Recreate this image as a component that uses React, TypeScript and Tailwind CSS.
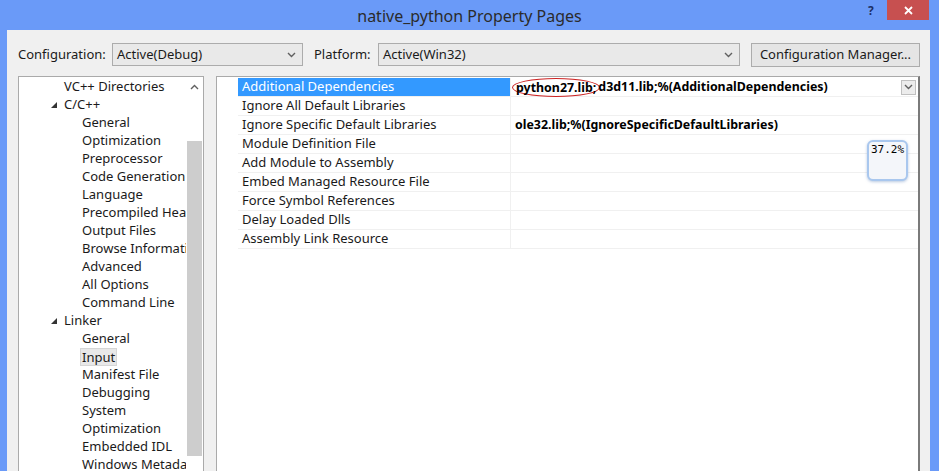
const font = { fontFamily: '"Noto Sans", "Open Sans", sans-serif' };

const tree: { label: string; level: number; arrow?: boolean; selected?: boolean }[] = [
  { label: "VC++ Directories", level: 1 },
  { label: "C/C++", level: 1, arrow: true },
  { label: "General", level: 2 },
  { label: "Optimization", level: 2 },
  { label: "Preprocessor", level: 2 },
  { label: "Code Generation", level: 2 },
  { label: "Language", level: 2 },
  { label: "Precompiled Headers", level: 2 },
  { label: "Output Files", level: 2 },
  { label: "Browse Information", level: 2 },
  { label: "Advanced", level: 2 },
  { label: "All Options", level: 2 },
  { label: "Command Line", level: 2 },
  { label: "Linker", level: 1, arrow: true },
  { label: "General", level: 2 },
  { label: "Input", level: 2, selected: true },
  { label: "Manifest File", level: 2 },
  { label: "Debugging", level: 2 },
  { label: "System", level: 2 },
  { label: "Optimization", level: 2 },
  { label: "Embedded IDL", level: 2 },
  { label: "Windows Metadata", level: 2 },
];

const props: { name: string; value?: string }[] = [
  { name: "Additional Dependencies", value: "d3d11.lib;%(AdditionalDependencies)" },
  { name: "Ignore All Default Libraries" },
  { name: "Ignore Specific Default Libraries", value: "ole32.lib;%(IgnoreSpecificDefaultLibraries)" },
  { name: "Module Definition File" },
  { name: "Add Module to Assembly" },
  { name: "Embed Managed Resource File" },
  { name: "Force Symbol References" },
  { name: "Delay Loaded Dlls" },
  { name: "Assembly Link Resource" },
];

function Chevron() {
  return (
    <svg width="9" height="6" viewBox="0 0 9 6" className="text-[#606060]">
      <path d="M1 1l3.5 3.5L8 1" fill="none" stroke="currentColor" strokeWidth="1.4" />
    </svg>
  );
}

function Combo({ width, text }: { width: string; text: string }) {
  return (
    <div className={`${width} h-[23px] flex items-center justify-between border border-[#acacac] bg-[#e9e9e9] pl-[4px] pr-[6px] text-[13px] text-[#1a1a1a]`}>
      <span>{text}</span>
      <Chevron />
    </div>
  );
}

export default function App() {
  return (
    <div style={font} className="w-[939px] h-[471px] overflow-hidden bg-[#6a9af8] flex flex-col">
      <div className="h-[30px] relative flex items-center justify-center shrink-0">
        <span className="text-[16px] text-[#2b2b2b] mt-[1px]">native_python Property Pages</span>
        <span className="absolute left-[868px] top-[2px] text-[12px] font-bold text-[#1c2f66]">?</span>
        <div className="absolute left-[887px] top-0 w-[42px] h-[20px] bg-[#c75050] flex items-center justify-center">
          <svg width="9" height="9" viewBox="0 0 9 9">
            <path d="M1 1l7 7M8 1l-7 7" stroke="white" strokeWidth="1.8" />
          </svg>
        </div>
      </div>
      <div className="ml-[7px] w-[923px] flex-1 bg-[#f0f0f0] flex flex-col">
        <div className="flex items-center h-[23px] mt-[13px] pl-[11px] text-[13px] text-[#1a1a1a]">
          <span className="w-[94px]">Configuration:</span>
          <Combo width="w-[191px]" text="Active(Debug)" />
          <span className="ml-[11px] w-[64px]">Platform:</span>
          <Combo width="w-[362px]" text="Active(Win32)" />
          <div className="ml-[11px] w-[169px] h-[24px] border border-[#acacac] bg-[#e5e5e5] flex items-center justify-center">
            Configuration Manager...
          </div>
        </div>
        <div className="flex mt-[10px] flex-1 min-h-0">
          <div className="ml-[11px] w-[186px] border border-[#aaaaaa] border-b-0 bg-white flex">
            <div className="flex-1 min-w-0 overflow-hidden pt-[1px] text-[13px] text-[#1a1a1a]">
              {tree.map((t, i) => (
                <div key={i} className="h-[18px] flex items-center whitespace-nowrap">
                  <span className={t.level === 1 ? "w-[45px] shrink-0 flex justify-end pr-[7px]" : "w-[63px] shrink-0"}>
                    {t.arrow && (
                      <svg width="6" height="6" viewBox="0 0 6 6">
                        <path d="M6 0V6H0Z" fill="#333" />
                      </svg>
                    )}
                  </span>
                  <span className={t.selected ? "bg-[#e8e8e8] border border-[#d6d6d6] px-[1px] -ml-[2px] leading-[16px]" : ""}>{t.label}</span>
                </div>
              ))}
            </div>
            <div className="w-[17px] shrink-0 flex flex-col items-center bg-white">
              <svg width="9" height="6" viewBox="0 0 9 6" className="mt-[7px]">
                <path d="M1 5l3.5-3.5L8 5" fill="none" stroke="#606060" strokeWidth="1.4" />
              </svg>
              <div className="mt-[51px] w-[15px] h-[315px] bg-[#cdcdcd]" />
            </div>
          </div>
          <div className="ml-[12px] w-[704px] border-l border-t border-[#aaaaaa] border-r-2 border-r-[#7a7a7a] bg-white">
            <div className="pl-[21px] pt-[1px]">
              {props.map((p, i) => (
                <div key={i} className="flex h-[19px] border-b border-[#f0f0f0] text-[13px]">
                  <div className={`w-[273px] shrink-0 pl-[4px] flex items-center border-r border-[#f0f0f0] ${i === 0 ? "bg-[#3399ff] text-white" : "text-[#1a1a1a]"}`}>
                    {p.name}
                  </div>
                  <div className="flex-1 flex items-center pl-[4px] pr-[2px] font-bold text-[12.4px] text-black relative">
                    {i === 0 && (
                      <>
                        <span className="rounded-[50%] border border-[#c22] px-[3px] -ml-[3px] leading-[17px]">python27.lib;</span>
                        <span className="-ml-[2px]">{p.value}</span>
                        <div className="ml-auto w-[15px] h-[15px] border border-[#c0c0c0] bg-[#ececec] flex items-center justify-center">
                          <Chevron />
                        </div>
                      </>
                    )}
                    {i !== 0 && p.value && <span>{p.value}</span>}
                    {i === 3 && (
                      <div className="absolute left-[356px] top-[5px] w-[41px] h-[41px] rounded-[6px] border-2 border-[#a9c7ee] bg-[#f4f6fa] shadow-[0_1px_3px_rgba(80,120,180,0.4)] font-normal text-[11px] leading-none flex justify-center pt-[2px]" style={{ fontFamily: '"DejaVu Sans Mono", monospace' }}>
                        37.2%
                      </div>
                    )}
                  </div>
                </div>
              ))}
            </div>
          </div>
        </div>
      </div>
    </div>
  );
}
